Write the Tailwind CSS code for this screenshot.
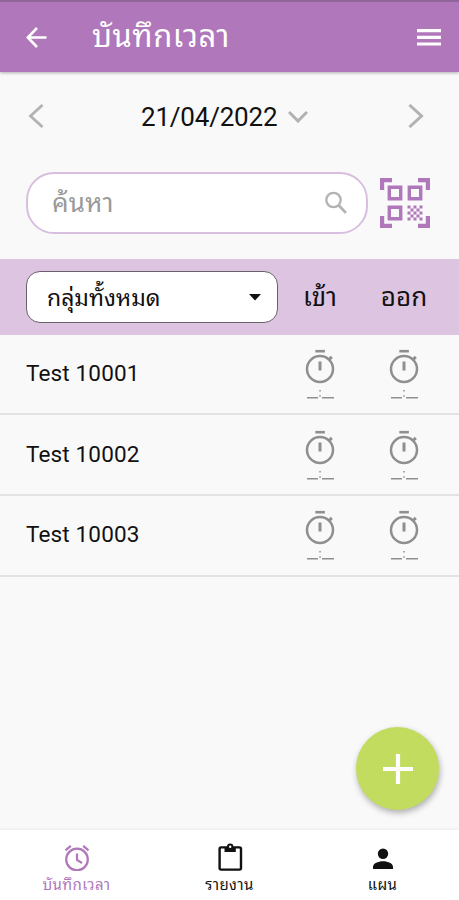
<!DOCTYPE html>
<html lang="th">
  <head>
    <meta charset="UTF-8" />
    <meta name="viewport" content="width=device-width, initial-scale=1.0" />
    <title>บันทึกเวลา</title>
    <script src="https://cdn.jsdelivr.net/npm/@tailwindcss/browser@4"></script>
  </head>
  <body
    class="relative flex flex-col h-screen overflow-hidden bg-[#f9f9f9] text-[#111] font-[Roboto,'Noto_Sans_Thai_Looped','Noto_Looped_Thai','Droid_Sans_Thai','Waree','Loma','Garuda','Umpush','Noto_Sans',sans-serif]"
  >
    <!-- shared icons -->
    <svg class="hidden">
      <symbol id="stopwatch" viewBox="0 0 30 36">
        <path d="M10.3 2.2h9.6" stroke="currentColor" stroke-width="2.6" />
        <circle cx="15" cy="20" r="13" fill="none" stroke="currentColor" stroke-width="2.5" />
        <path d="M15 12.5v9M24 10.7l2.8-2.8" stroke="currentColor" stroke-width="3" />
      </symbol>
      <symbol id="no-time" viewBox="0 0 27 10">
        <path d="M0 8h11v1.4H0zM15 8h12v1.4H15zM12.3 1h1.5v1.5h-1.5zM12.3 6.2h1.5v1.5h-1.5z" fill="currentColor" />
      </symbol>
    </svg>

    <header
      class="flex shrink-0 items-center h-[72px] border-t-2 border-[#8f6697] bg-[#b077bb] pl-[26px] pr-[18px] text-white shadow-[0_1px_3px_rgba(0,0,0,0.3)]"
    >
      <svg class="w-[21px] h-[21px]" viewBox="0 0 21 21" fill="none" stroke="currentColor" stroke-width="2.6">
        <path d="M20.5 10.5H2M11 1L1.7 10.5 11 20" />
      </svg>
      <h1 class="ml-[45px] text-[31px] leading-[40px] tracking-[0.5px]">บันทึกเวลา</h1>
      <svg class="ml-auto w-6 h-[17px]" viewBox="0 0 24 17" fill="currentColor">
        <path d="M0 0h24v3.2H0zM0 6.7h24v3.2H0zM0 13.4h24v3.2H0z" />
      </svg>
    </header>

    <div class="flex shrink-0 items-center h-[90px] pl-[28px] pr-[35px] text-[#b2b2b2]">
      <svg class="w-4 h-6 -mt-0.5" viewBox="0 0 16 24" fill="none" stroke="currentColor" stroke-width="2.8">
        <path d="M14.5 1L2.5 12l12 11" />
      </svg>
      <span class="ml-[97px] text-[26px] tracking-[-0.2px] text-[#111]">21/04/2022</span>
      <svg class="ml-[11px] w-5 h-3" viewBox="0 0 20 12" fill="none" stroke="currentColor" stroke-width="3">
        <path d="M1 1l9 9 9-9" />
      </svg>
      <svg class="ml-auto w-4 h-6 -mt-0.5" viewBox="0 0 16 24" fill="none" stroke="currentColor" stroke-width="3">
        <path d="M1.5 1l12 11-12 11" />
      </svg>
    </div>

    <div class="flex shrink-0 items-center h-[97px] pt-[10px] pb-[25px] pl-[26px] pr-[29px]">
      <div
        class="flex items-center w-[342px] h-[62px] rounded-[28px] border-2 border-[#d9bfdf] bg-white pl-6 pr-[18px]"
      >
        <span class="text-[26px] leading-[34px] tracking-[0.2px] text-[#999]">ค้นหา</span>
        <svg class="ml-auto w-6 h-6" viewBox="0 0 24 24" fill="none" stroke="#b3b3b3">
          <circle cx="9.5" cy="9" r="7.2" stroke-width="2.3" />
          <path d="M14.7 14.3l7.2 7.6" stroke-width="2.8" />
        </svg>
      </div>
      <svg class="ml-auto w-[50px] h-[50px]" viewBox="0 0 50 50" fill="none" stroke="#b077bb" stroke-width="3.4">
        <path d="M2 12V2h10M38 2h10v10M48 38v10H38M12 48H2V38" stroke-width="4.4" />
        <path d="M9.3 9.3h11.4v11.4H9.3zM29.3 9.3h11.4v11.4H29.3zM9.3 29.3h11.4v11.4H9.3z" />
        <path
          d="M27.5 27.5h3v3h-3zM33.5 27.5h3v3h-3zM39.5 27.5h3v3h-3zM30.5 30.5h3v3h-3zM36.5 30.5h3v3h-3zM27.5 33.5h3v3h-3zM33.5 33.5h3v3h-3zM39.5 33.5h3v3h-3zM30.5 36.5h3v3h-3zM36.5 36.5h3v3h-3zM27.5 39.5h3v3h-3zM33.5 39.5h3v3h-3zM39.5 39.5h3v3h-3z"
          fill="#b077bb"
          stroke="none"
        />
      </svg>
    </div>

    <div class="flex shrink-0 items-center h-[76px] bg-[#ddc5e1] pl-[26px] pr-[13px]">
      <div
        class="flex items-center w-[252px] h-[52px] rounded-[14px] border-[1.5px] border-[#69606c] bg-white pl-5 pr-4"
      >
        <span class="pt-1 text-[23px] leading-[34px]">กลุ่มทั้งหมด</span>
        <svg class="ml-auto w-3 h-[7px]" viewBox="0 0 12 7" fill="#111">
          <path d="M0 0h12L6 6.5z" />
        </svg>
      </div>
      <span class="w-[84px] text-center text-[26px] leading-[34px]">เข้า</span>
      <span class="w-[84px] text-center text-[26px] leading-[34px]">ออก</span>
    </div>

    <ul class="shrink-0">
      <li class="flex items-center h-20 border-b-2 border-[#e3e3e3] pl-[26px] pr-[13px]">
        <span class="w-[252px] text-[22.5px] tracking-[0.15px]">Test 10001</span>
        <div class="flex flex-col items-center w-[84px] text-[#8f8f8f]">
          <svg class="w-[30px] h-9"><use href="#stopwatch" /></svg>
          <svg class="mt-1 w-[27px] h-[10px]"><use href="#no-time" /></svg>
        </div>
        <div class="flex flex-col items-center w-[84px] text-[#8f8f8f]">
          <svg class="w-[30px] h-9"><use href="#stopwatch" /></svg>
          <svg class="mt-1 w-[27px] h-[10px]"><use href="#no-time" /></svg>
        </div>
      </li>
      <li class="flex items-center h-[81px] border-b-2 border-[#e3e3e3] pl-[26px] pr-[13px]">
        <span class="w-[252px] text-[22.5px] tracking-[0.15px]">Test 10002</span>
        <div class="flex flex-col items-center w-[84px] text-[#8f8f8f]">
          <svg class="w-[30px] h-9"><use href="#stopwatch" /></svg>
          <svg class="mt-1 w-[27px] h-[10px]"><use href="#no-time" /></svg>
        </div>
        <div class="flex flex-col items-center w-[84px] text-[#8f8f8f]">
          <svg class="w-[30px] h-9"><use href="#stopwatch" /></svg>
          <svg class="mt-1 w-[27px] h-[10px]"><use href="#no-time" /></svg>
        </div>
      </li>
      <li class="flex items-center h-[81px] border-b-2 border-[#e3e3e3] pl-[26px] pr-[13px] pb-0.5">
        <span class="w-[252px] text-[22.5px] tracking-[0.15px]">Test 10003</span>
        <div class="flex flex-col items-center w-[84px] text-[#8f8f8f]">
          <svg class="w-[30px] h-9"><use href="#stopwatch" /></svg>
          <svg class="mt-1 w-[27px] h-[10px]"><use href="#no-time" /></svg>
        </div>
        <div class="flex flex-col items-center w-[84px] text-[#8f8f8f]">
          <svg class="w-[30px] h-9"><use href="#stopwatch" /></svg>
          <svg class="mt-1 w-[27px] h-[10px]"><use href="#no-time" /></svg>
        </div>
      </li>
    </ul>

    <!-- add button -->
    <button
      class="absolute right-5 bottom-[90px] flex items-center justify-center w-[83px] h-[83px] rounded-full bg-[#c1dc5f] shadow-[1px_3px_6px_rgba(0,0,0,0.3)]"
    >
      <svg class="w-[30px] h-[30px]" viewBox="0 0 30 30" stroke="#fff" stroke-width="4.2">
        <path d="M15 0v30M0 15h30" />
      </svg>
    </button>

    <nav
      class="grid grid-cols-3 mt-auto h-[70px] shrink-0 bg-white pt-[13px] text-[15px] leading-[20px] tracking-[0.4px] shadow-[0_-1px_3px_rgba(0,0,0,0.06)]"
    >
      <a class="flex flex-col items-center gap-1 text-[#b077bb]">
        <svg class="w-7 h-7" viewBox="0 0 28 28" fill="none" stroke="currentColor" stroke-width="2.2">
          <circle cx="14" cy="16.5" r="10.8" />
          <path d="M14 10.5V17l5 3M2.5 7.4l5.3-4.5M25.5 7.4l-5.3-4.5" />
        </svg>
        <span>บันทึกเวลา</span>
      </a>
      <a class="flex flex-col items-center gap-1">
        <svg class="w-7 h-7" viewBox="0 0 28 28" fill="none" stroke="currentColor" stroke-width="2.4">
          <rect x="3.6" y="4.4" width="21.4" height="22.2" rx="1.5" />
          <path d="M8.5 4h11.3v5H8.5z" fill="currentColor" stroke="none" />
          <circle cx="14.2" cy="3.8" r="2.2" fill="#fff" stroke-width="2" />
        </svg>
        <span>รายงาน</span>
      </a>
      <a class="flex flex-col items-center gap-1">
        <svg class="w-7 h-7" viewBox="0 0 28 28" fill="currentColor">
          <circle cx="14" cy="10.8" r="5.2" />
          <path d="M4 26v-2.2c0-3.4 5-5.6 10-5.6s10 2.2 10 5.6V26z" />
        </svg>
        <span>แผน</span>
      </a>
    </nav>
  </body>
</html>
